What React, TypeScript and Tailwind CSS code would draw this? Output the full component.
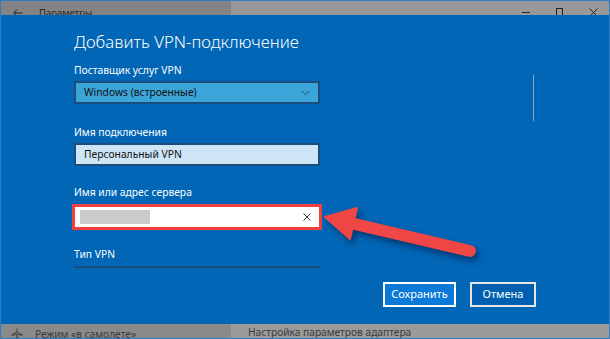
import React from 'react';

const font = { fontFamily: '"Noto Sans", "Open Sans", sans-serif' };

const Field: React.FC<{ label: string; children: React.ReactNode; className?: string }> = ({ label, children, className }) => (
  <div className={className}>
    <div className="text-[10.3px] leading-[15px] text-white">{label}</div>
    {children}
  </div>
);

const App: React.FC = () => {
  return (
    <div className="relative w-[610px] h-[339px] overflow-hidden border border-[#2f7dc6] flex flex-col" style={font}>
      {/* Title bar */}
      <div className="h-[14px] flex shrink-0 overflow-hidden text-[#222]">
        <div className="w-[230px] bg-[#838383] flex items-start pt-[6px]">
          <svg width="10" height="8" viewBox="0 0 10 8" className="ml-[12px] mt-[2px]">
            <path d="M4 0.5 L0.8 4 L4 7.5 M0.8 4 H9.5" stroke="#222" strokeWidth="1" fill="none" />
          </svg>
          <span className="ml-[16px] text-[9.5px] leading-[12px]">Параметры</span>
        </div>
        <div className="flex-1 bg-[#989898] flex items-start justify-end pt-[7px]">
          <div className="w-[8px] h-px bg-[#222] mt-[4px]" />
          <div className="ml-[26px] w-[7px] h-[9px] border border-[#222]" />
          <svg width="9" height="9" viewBox="0 0 9 9" className="ml-[26px] mr-[11px]">
            <path d="M0.5 0.5 L8.5 8.5 M8.5 0.5 L0.5 8.5" stroke="#222" strokeWidth="1" />
          </svg>
        </div>
      </div>

      {/* Main area */}
      <div className="flex-1 bg-[#0066b5] flex flex-col relative">
        <div className="h-[253px] overflow-hidden pl-[73px] pt-[14px]">
          <h1 className="text-[16.8px] leading-[26px] text-white font-light">Добавить VPN-подключение</h1>
          <Field label="Поставщик услуг VPN" className="mt-[8px]">
            <div className="mt-[3px] w-[246px] h-[23px] bg-[#3ba5da] border-2 border-[#1b4d7d] flex items-center justify-between pl-[8px] pr-[8px]">
              <span className="text-[10.3px] text-[#111]">Windows (встроенные)</span>
              <svg width="9" height="6" viewBox="0 0 9 6">
                <path d="M0.5 0.8 L4.5 4.8 L8.5 0.8" stroke="#27506f" strokeWidth="1" fill="none" />
              </svg>
            </div>
          </Field>
          <Field label="Имя подключения" className="mt-[21px]">
            <div className="mt-[3px] w-[246px] h-[23px] bg-[#cde5f5] border-2 border-[#1b4d7d] flex items-center pl-[8px]">
              <span className="text-[10.3px] text-[#111]">Персональный VPN</span>
            </div>
          </Field>
          <Field label="Имя или адрес сервера" className="mt-[19px]">
            <div className="mt-[4px] -ml-[2px] w-[250px] h-[26px] border-[3px] border-[#f0403f] bg-white flex items-center justify-between pl-[5px] pr-[8px]">
              <div className="w-[70px] h-[14px] bg-[#cbcbcb]" />
              <svg width="8" height="8" viewBox="0 0 8 8">
                <path d="M0.5 0.5 L7.5 7.5 M7.5 0.5 L0.5 7.5" stroke="#333" strokeWidth="1" />
              </svg>
            </div>
          </Field>
          <Field label="Тип VPN" className="mt-[17px]">
            <div className="mt-[4px] w-[246px] h-[23px] bg-[#3ba5da] border-2 border-[#1b4d7d]" />
          </Field>
        </div>

        {/* scrollbar */}
        <div className="absolute left-[532px] top-[60px] w-px h-[46px] bg-[#8aa4bf]" />

        <div className="flex justify-end gap-[14px] pr-[73px] mt-[14px]">
          <button className="w-[73px] h-[25px] bg-[#0a79d8] border-2 border-white text-white text-[11px]">Сохранить</button>
          <button className="w-[66px] h-[25px] bg-[#005fae] border-2 border-[#e6e6e6] text-white text-[11px]">Отмена</button>
        </div>
      </div>

      {/* Bottom bar */}
      <div className="h-[14px] flex shrink-0 overflow-hidden text-[#3a3a3a]">
        <div className="w-[230px] bg-[#8a8a8a] flex items-start pt-[3px]">
          <svg width="12" height="11" viewBox="0 0 12 11" className="ml-[10px] mt-[1px]">
            <path d="M6 0.5 V4 L11 6.5 V7.5 L6 6 V9 L8 10.5 H4 L6 9 M6 6 L1 7.5 V6.5 L6 4" stroke="#3a3a3a" strokeWidth="0.9" fill="none" />
          </svg>
          <span className="ml-[12px] text-[10.2px] leading-[14px]">Режим «в самолете»</span>
        </div>
        <div className="flex-1 bg-[#9b9b9b] flex items-start pt-[1px]">
          <span className="ml-[17px] text-[10.2px] leading-[14px]">Настройка параметров адаптера</span>
        </div>
      </div>

      {/* Red arrow overlay */}
      <svg className="absolute left-0 top-0 pointer-events-none" width="610" height="339" viewBox="0 0 610 339" style={{ filter: 'drop-shadow(3px 4px 3px rgba(0,20,60,0.55))' }}>
        <line x1="345" y1="221" x2="469" y2="250" stroke="#f04646" strokeWidth="12" strokeLinecap="round" />
        <polygon points="324,216 356,207 349,238" fill="#f04646" stroke="#f04646" strokeWidth="2" strokeLinejoin="round" />
      </svg>
    </div>
  );
};

export default App;
